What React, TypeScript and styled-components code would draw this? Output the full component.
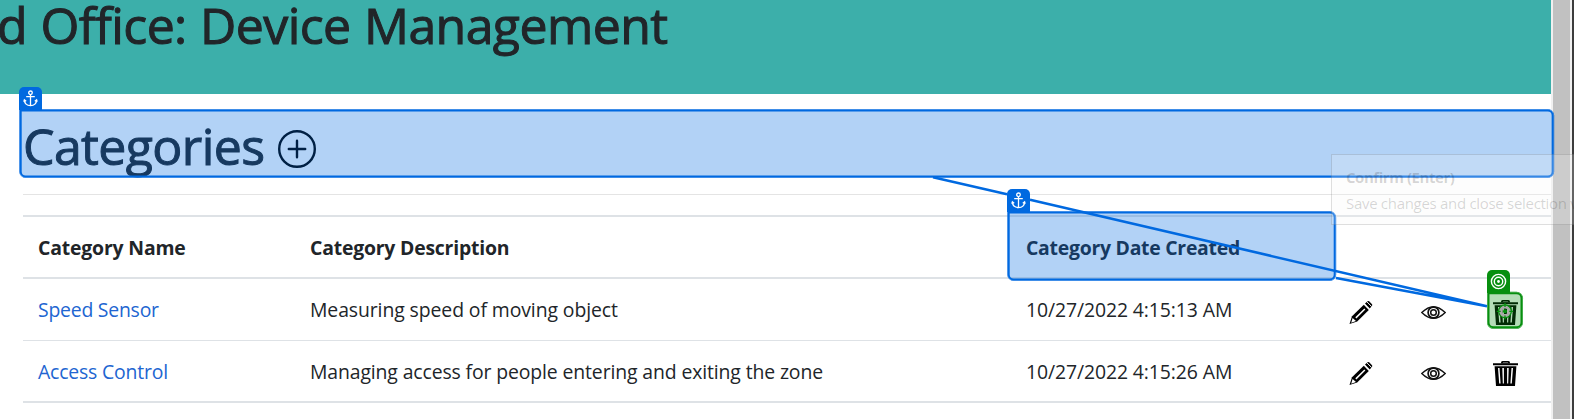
import React from "react";
import styled, { createGlobalStyle } from "styled-components";

const Global = createGlobalStyle`
  * { box-sizing: border-box; }
  body { margin: 0; background: #fff; overflow: hidden; font-family: "Open Sans", "Noto Sans", sans-serif; color: #212529; }
`;

const Screen = styled.div`
  position: relative;
  display: flex;
  width: 1574px;
  height: 419px;
  overflow: hidden;
`;
const Page = styled.main`
  width: 1551px;
  flex: none;
`;
const Banner = styled.header`
  height: 94px;
  background: #3cafaa;
  overflow: hidden;
`;
const Heading = styled.h1<{ $track?: number }>`
  margin: 0;
  font-size: 50px;
  font-weight: 500;
  line-height: 68px;
  white-space: nowrap;
  -webkit-text-stroke: 1px currentColor;
  letter-spacing: ${(p) => p.$track ?? 0}px;
`;
const BannerTitle = styled(Heading)`
  margin: -9px 0 0 -3px;
  word-spacing: 1px;
`;
const TitleRow = styled.div`
  display: flex;
  align-items: center;
  height: 68px;
  margin: 18px 0 0 23px;
`;
const AddButton = styled.button`
  display: flex;
  border: 0;
  padding: 0;
  margin: 5px 0 0 14px;
  background: none;
`;
const Rule = styled.hr`
  height: 1px;
  border: 0;
  margin: 14px 0 20px 23px;
  background: #e4e4e4;
`;
const Table = styled.div`
  margin-left: 23px;
  border-top: 2px solid #dee2e6;
  border-bottom: 2px solid #dee2e6;
`;
const Row = styled.div<{ $height: number; $line?: number }>`
  display: grid;
  grid-template-columns: 272px 716px 323px 72px 72px 73px;
  align-items: center;
  height: ${(p) => p.$height}px;
  border-bottom: ${(p) => p.$line ?? 0}px solid #dee2e6;
`;
const Cell = styled.div<{ $track?: number; $bold?: boolean; $link?: boolean }>`
  padding: 1px 0 0 15px;
  font-size: 19.4px;
  line-height: 28px;
  white-space: nowrap;
  font-weight: ${(p) => (p.$bold ? 700 : 400)};
  color: ${(p) => (p.$link ? "#2165d1" : "#212529")};
  letter-spacing: ${(p) => p.$track ?? 0}px;
`;
const IconCell = styled.div`
  display: flex;
  padding: 5px 0 0 15px;
`;
const ScrollBar = styled.aside`
  width: 21px;
  background: #c1c1c1;
  border-left: 2px solid #f0f0f0;
  border-right: 2px solid #f0f0f0;
`;
const WindowEdge = styled.div`
  width: 2px;
  background: #3c3c3c;
`;

const Mark = styled.div<{ $x: number; $y: number; $w: number; $h: number; $green?: boolean }>`
  position: absolute;
  left: 0;
  top: 0;
  transform: translate(${(p) => p.$x}px, ${(p) => p.$y}px);
  width: ${(p) => p.$w}px;
  height: ${(p) => p.$h}px;
  border: 2px solid ${(p) => (p.$green ? "#078f0f" : "#0069e0")};
  border-radius: 0 6px 6px 6px;
  box-shadow: 0 0 0 0.5px ${(p) => (p.$green ? "#078f0f" : "#0069e0")};
  background: ${(p) => (p.$green ? "rgba(7,143,15,.3)" : "rgba(0,105,224,.3)")};
`;
const Badge = styled.div<{ $x: number; $y: number; $green?: boolean }>`
  position: absolute;
  left: ${(p) => p.$x}px;
  top: ${(p) => p.$y}px;
  width: 23px;
  height: 23px;
  display: flex;
  align-items: center;
  justify-content: center;
  border-radius: 5px 5px 0 0;
  background: ${(p) => (p.$green ? "#078f0f" : "#0069e0")};
`;
const Overlay = styled.svg`
  position: absolute;
  left: 0;
  top: 0;
`;
const Tooltip = styled.div`
  position: absolute;
  left: 1331px;
  top: 154px;
  width: 300px;
  height: 71px;
  padding: 9px 14px;
  border: 1px solid rgba(0, 0, 0, 0.12);
  background: rgba(245, 245, 245, 0.22);
`;
const TipText = styled.div<{ $bold?: boolean; $track: number }>`
  font-size: 15px;
  line-height: 26px;
  white-space: nowrap;
  font-weight: ${(p) => (p.$bold ? 700 : 400)};
  color: rgba(0, 0, 0, 0.17);
  letter-spacing: ${(p) => p.$track}px;
`;

const Pencil = () => (
  <svg width="25" height="25" viewBox="0 0 25 25">
    <path d="M0.5 24 3 16.3 14.8 4.8 19.8 9.9 8.2 21.4Z" />
    <path d="M16 3.6 18.6 1.2Q19.4.6 20.2 1.3L23 4.2Q23.6 5 23 5.8L20.8 8.6Z" />
    <path d="M3.6 18 7 21 2.2 22.8Z M6.3 17.3 15.3 8.4 16.4 9.5 7.4 18.5Z" fill="#fff" />
    <path d="M18 1.9 22.6 6.5" stroke="#fff" strokeWidth="1" />
  </svg>
);
const Eye = () => (
  <svg width="25" height="25" viewBox="0 0 25 25" fill="none" stroke="#111">
    <path d="M.8 12.5Q12.5 .8 24.2 12.5Q12.5 24.2 .8 12.5Z" strokeWidth="1.4" />
    <circle cx="12.5" cy="12.5" r="5.4" strokeWidth="1.7" />
    <circle cx="12.5" cy="12.5" r="2.8" strokeWidth="1.5" />
  </svg>
);
const Trash = () => (
  <svg width="25" height="25" viewBox="0 0 25 25">
    <path d="M8 2.5V1.5Q8 0 9.5 0H15.5Q17 0 17 1.5V2.5Z" />
    <path d="M10 1.2H15V2.2H10Z" fill="#777" />
    <path d="M0 2.2H25V4.2H0Z M1.6 5.2H23.4L22 25H3Z" />
    <path d="M5 7H6.5L7.6 22.5H6.2Z M9.3 7H10.9V22.5H9.8Z M14.1 7H15.7L15.2 22.5H14.1Z M18.5 7H20L18.8 22.5H17.4Z" fill="#fff" />
  </svg>
);
const Anchor = () => (
  <svg width="15" height="17" viewBox="0 0 15 17" fill="none" stroke="#fff" strokeWidth="1.3">
    <circle cx="7.5" cy="2.8" r="1.8" />
    <path d="M7.5 4.6V15.5M3.2 6.6H11.8M1.3 10Q1.8 15.4 7.5 15.6Q13.2 15.4 13.7 10M.8 11.8 1.4 9.8 3.2 11.2M14.2 11.8 13.6 9.8 11.8 11.2" />
  </svg>
);
const Target = () => (
  <svg width="17" height="17" viewBox="0 0 17 17" fill="none" stroke="#fff" strokeWidth="1.4">
    <circle cx="8.5" cy="8.5" r="7.1" />
    <circle cx="8.5" cy="8.5" r="4.2" />
    <circle cx="8.5" cy="8.5" r="1.4" fill="#fff" stroke="none" />
  </svg>
);

const rows = [
  { name: "Speed Sensor", text: "Measuring speed of moving object", date: "10/27/2022 4:15:13 AM", t: [-0.22, -0.09, -0.1] },
  { name: "Access Control", text: "Managing access for people entering and exiting the zone", date: "10/27/2022 4:15:26 AM", t: [-0.17, -0.12, -0.1] },
];

export default function App() {
  return (
    <Screen>
      <Global />
      <Page>
        <Banner>
          <BannerTitle $track={-0.58}>d Office: Device Management</BannerTitle>
        </Banner>
        <TitleRow>
          <Heading $track={-0.6}>Categories</Heading>
          <AddButton aria-label="Add category">
            <svg width="38" height="38" viewBox="0 0 38 38" fill="none" stroke="#000" strokeWidth="2.4">
              <circle cx="19" cy="19" r="17.8" />
              <path d="M19 10.8V27.2M10.8 19H27.2" strokeLinecap="round" />
            </svg>
          </AddButton>
        </TitleRow>
        <Rule />
        <Table>
          <Row $height={62} $line={2}>
            <Cell $bold $track={-0.16}>Category Name</Cell>
            <Cell $bold $track={-0.2}>Category Description</Cell>
            <Cell $bold $track={-0.25}>Category Date Created</Cell>
          </Row>
          {rows.map((r, i) => (
            <Row key={r.name} $height={i === 0 ? 62 : 60} $line={i === 0 ? 1 : 0}>
              <Cell $link $track={r.t[0]}>{r.name}</Cell>
              <Cell $track={r.t[1]}>{r.text}</Cell>
              <Cell $track={r.t[2]}>{r.date}</Cell>
              <IconCell><Pencil /></IconCell>
              <IconCell><Eye /></IconCell>
              <IconCell><Trash /></IconCell>
            </Row>
          ))}
        </Table>
      </Page>
      <ScrollBar />
      <WindowEdge />
      <Mark $x={19.7} $y={109.5} $w={1534} $h={67.5} />
      <Mark $x={1007.7} $y={211.5} $w={328} $h={69} />
      <Mark $green $x={1487.5} $y={292.3} $w={35} $h={36} />
      <Badge $x={19} $y={87}><Anchor /></Badge>
      <Badge $x={1007} $y={189}><Anchor /></Badge>
      <Badge $green $x={1487} $y={270}><Target /></Badge>
      <Overlay width="1574" height="419" viewBox="0 0 1574 419" fill="none">
        <path d="M933 177.3 1007 194.3M1030 199.7 1487 306.3M1336 278 1487 306.3" stroke="#0069e0" strokeWidth="2.5" />
        <circle cx="1505" cy="311.3" r="4.5" stroke="#aaa" strokeWidth="3.4" />
        <circle cx="1505" cy="311.3" r="6.4" stroke="#078f0f" strokeWidth="1.2" />
        <circle cx="1505" cy="311.3" r="2" fill="#078f0f" />
        <path d="M1505 303V307M1505 315.6V319.6M1496.7 311.3H1500.7M1509.3 311.3H1513.3" stroke="#078f0f" strokeWidth="1.3" />
      </Overlay>
      <Tooltip>
        <TipText $bold $track={-0.45}>Confirm (Enter)</TipText>
        <TipText $track={-0.3}>Save changes and close selection view</TipText>
      </Tooltip>
    </Screen>
  );
}
